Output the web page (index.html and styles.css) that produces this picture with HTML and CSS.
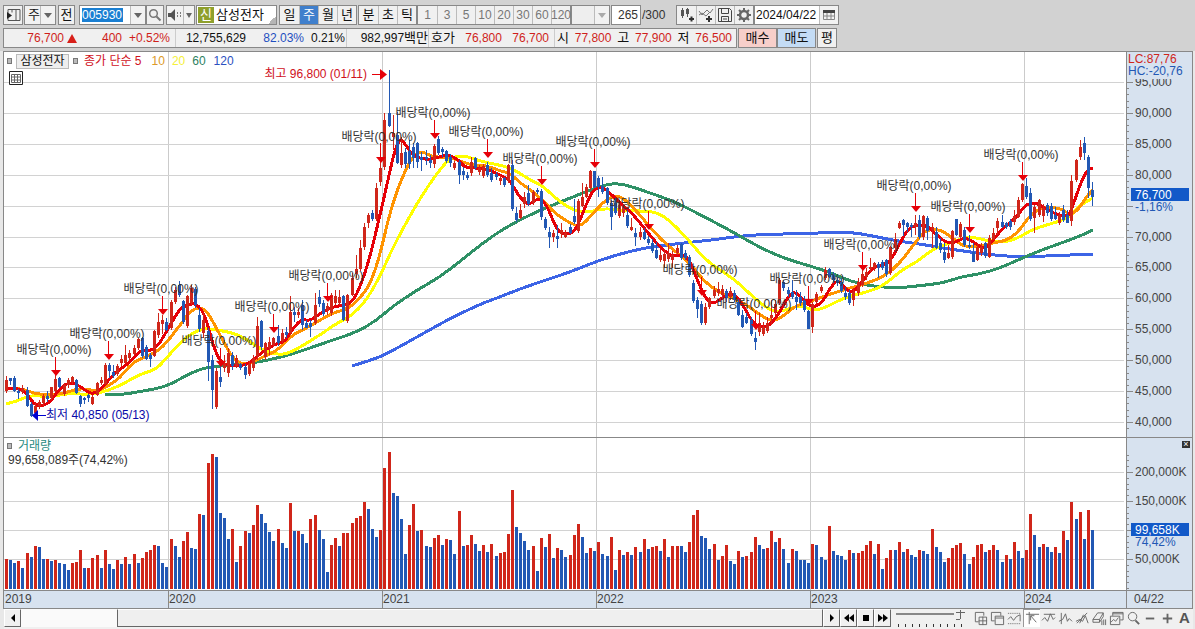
FILE: index.html
```html
<!DOCTYPE html>
<html lang="ko">
<head>
<meta charset="utf-8">
<title>삼성전자 주봉 차트</title>
<link rel="stylesheet" href="styles.css">
</head>
<body>
<header class="top">
  <form class="tools">
    <button type="button" class="btn" aria-label="패널"><svg width="15" height="14" viewBox="0 0 15 14"><path d="M2 5V1.500h12v11H2V10M6 1.500v3M10 12V2" fill="none" stroke="#555"/><path d="M1 4l5 3.500L1 11z" fill="#222"/></svg></button>
    <span class="drop drop-s"><select aria-label="구분"><option>주</option></select><i class="arrow"></i></span>
    <button type="button" class="btn prev">전</button>
    <span class="drop code"><input class="code-in" aria-label="종목코드" value="005930"><i class="arrow"></i></span>
    <button type="button" class="btn flush" aria-label="검색"><svg width="14" height="14" viewBox="0 0 14 14"><circle cx="5.500" cy="5.500" r="3.800" fill="none" stroke="#777" stroke-width="1.500"/><path d="M8.500 8.500l4 4" stroke="#777" stroke-width="2"/></svg></button>
    <span class="drop snd"><button type="button" aria-label="소리"><svg width="15" height="14" viewBox="0 0 15 14"><path d="M1 5h3l4-4v12L4 9H1z" fill="#555"/><path d="M10 5h1M13 5h1M10 8h1M13 8h1" stroke="#555" stroke-width="1.500"/></svg></button><i class="arrow arrow-s"></i></span>
    <span class="name"><b>신</b><input aria-label="종목명" value="삼성전자"></span>
    <span class="seg"><button type="button">일</button><button type="button" class="on">주</button><button type="button">월</button><button type="button">년</button></span>
    <span class="seg flat"><button type="button">분</button><button type="button">초</button><button type="button">틱</button></span>
    <span class="seg flat off"><button type="button">1</button><button type="button">3</button><button type="button">5</button><button type="button">10</button><button type="button">20</button><button type="button">30</button><button type="button">60</button><button type="button">120</button></span>
    <span class="drop blank"><select aria-label="주기" disabled><option></option></select><i class="arrow arrow-off"></i></span>
    <span class="count"><input id="cnt" aria-label="봉 개수" value="265"><label for="cnt">/300</label></span>
    <span class="seg flat icons">
      <button type="button" aria-label="봉 추가"><svg width="16" height="16" viewBox="0 0 16 16"><path d="M3.500 1v10M8.500 1v9" stroke="#555"/><path d="M2 3h3v6H2zM7 2h3v5H7z" fill="#555"/><path d="M10 12h5M12.500 9.500v5" stroke="#333" stroke-width="2"/></svg></button>
      <button type="button" aria-label="지표 추가"><svg width="16" height="16" viewBox="0 0 16 16"><path d="M1 4l3 4 5-5 3 3 3-4M1 8l3-2 4 3 3-3" fill="none" stroke="#777"/><path d="M8 12h6M11 9v6" stroke="#333" stroke-width="2"/></svg></button>
      <button type="button" aria-label="저장"><svg width="16" height="16" viewBox="0 0 16 16"><path d="M1.500 1.500h11l2 2v11h-13zM4.500 1.500v5h7v-5M4.500 14.500v-5h7v5M6 12h4" fill="none" stroke="#444"/></svg></button>
      <button type="button" aria-label="설정"><svg width="16" height="16" viewBox="0 0 16 16"><circle cx="8" cy="8" r="4" fill="none" stroke="#666" stroke-width="2.500"/><path d="M8 1v3M8 12v3M1 8h3M12 8h3M3 3l2 2M11 11l2 2M13 3l-2 2M3 13l2-2" stroke="#666" stroke-width="2"/></svg></button>
    </span>
    <span class="date"><input aria-label="날짜" value="2024/04/22"><button type="button" aria-label="달력"><svg width="12" height="12" viewBox="0 0 12 12"><path d="M.500 1.500h11v9H.500zM4 4v6M8 4v6M1 7h10" fill="none" stroke="#888"/><path d="M0 1h12v3H0z" fill="#444"/></svg></button></span>
  </form>
  <div class="quote">
    <div class="strip">
      <div class="cell c1"><span class="up w1">76,700</span><i class="tri"></i><span class="up w2">400</span><span class="up w3">+0.52%</span></div>
      <div class="cell c2"><span class="w4">12,755,629</span><span class="down w5">82.03%</span><span class="w6">0.21%</span></div>
      <div class="cell c3"><span>982,997<span class="ko">백만</span></span></div>
      <div class="cell c4"><span class="ko">호가</span><span class="up">76,800</span><span class="up">76,700</span></div>
      <div class="cell c5"><span class="ko">시</span><span class="up">77,800</span><span class="ko">고</span><span class="up">77,900</span><span class="ko">저</span><span class="up">76,500</span></div>
    </div>
    <button type="button" class="trade buy">매수</button><button type="button" class="trade sell">매도</button><button type="button" class="btn avg">평</button>
  </div>
</header>
<main class="chart">
  <section class="panel price">
    <svg class="draw" id="price"></svg>
    <div class="legend"><i class="dot"></i><span class="tag">삼성전자</span><i class="dot"></i><span class="m5">종가 단순 5</span><span class="m10">10</span><span class="m20">20</span><span class="m60">60</span><span class="m120">120</span></div>
    <button type="button" class="table-btn" aria-label="표"><svg width="14" height="14" viewBox="0 0 14 14"><path d="M.500.500h13v13H.500z" fill="#fff" stroke="#222"/><path d="M2.500 3.500h9v8h-9zM2.500 6h9M2.500 9h9M5.500 3v8.500M8.500 3v8.500" fill="none" stroke="#666"/></svg></button>
  </section>
  <aside class="axis"><svg class="draw" id="priceAxis"></svg></aside>
  <section class="panel volume">
    <svg class="draw" id="vol"></svg>
    <div class="legend vleg"><i class="dot"></i><span class="vname">거래량</span></div>
    <div class="vval">99,658,089주(74,42%)</div>
  </section>
  <aside class="axis volume"><svg class="draw" id="volAxis"></svg><button type="button" class="close" aria-label="닫기">×</button></aside>
  <div class="years"><svg class="draw" id="years"></svg></div>
  <div class="years last">04/22</div>
</main>
<footer class="foot">
  <button type="button" class="raised" aria-label="왼쪽"><svg width="6" height="8"><path d="M5 0v8L1 4z"/></svg></button>
  <div class="track"><div class="thumb"></div></div>
  <button type="button" class="raised" aria-label="오른쪽"><svg width="6" height="8"><path d="M1 0v8l4-4z"/></svg></button>
  <button type="button" class="raised" aria-label="빠르게 뒤로"><svg width="10" height="8"><path d="M5 0v8L0 4zM10 0v8L5 4z"/></svg></button>
  <button type="button" class="raised" aria-label="정지"><svg width="8" height="8"><path d="M1 1h6v6H1z"/></svg></button>
  <button type="button" class="raised" aria-label="빠르게 앞으로"><svg width="10" height="8"><path d="M0 0v8l5-4zM5 0v8l5-4z"/></svg></button>
  <input type="range" class="speed" aria-label="속도" value="100">
  <div class="draws">
    <button type="button" aria-label="창 추가"><svg viewBox="0 0 16 16"><path d="M6 11.500H2.500V1.500h9V5M6.500 6.500h8v8h-8zM10.500 6v9M6 10.500h9"/></svg></button>
    <button type="button" aria-label="창 겹치기"><svg viewBox="0 0 16 16"><path d="M5 10.500H1.500V1.500h10V5M5.500 5.500h9v9h-9zM5.500 7.500h9"/></svg></button>
    <button type="button" aria-label="영역"><svg viewBox="0 0 16 16"><path d="M1 2.500h13M1 13.500h13" stroke-dasharray="1 1"/><path d="M1 9l3-3 3 4 3-4 4-2M14 4v7"/></svg></button>
    <button type="button" class="on" aria-label="십자선"><svg viewBox="0 0 16 16"><path d="M1 3.500h14M4.500 1v13M6 5l6 7M6 5h4M6 5v5"/></svg></button>
    <button type="button" aria-label="추세"><svg viewBox="0 0 16 16"><path d="M3 3.500h12M1 10l3-3 3 4 3-8 3 6 2-2"/></svg></button>
    <button type="button" aria-label="파동"><svg viewBox="0 0 16 16"><path d="M3.500 2v12M1 11l4-2 3-6 2 8 2-3 3 3"/></svg></button>
    <button type="button" aria-label="추세선"><svg viewBox="0 0 16 16"><path d="M2 13L13 2M1 11l4-2 3 2 3-6 3 8M5 13L9 4"/></svg></button>
    <button type="button" aria-label="지우개"><svg viewBox="0 0 16 16"><path d="M1 9l5-7h6L8 9zM1 9v3h7V9M8 12l4-6V2M10.500 10v5M12.500 9v6M14.500 9v6"/></svg></button>
    <button type="button" aria-label="차트 저장"><svg viewBox="0 0 16 16"><path d="M4 5V1.500h11v8h-3M1.500 5.500h10v9h-10zM2 12l3-3 2 2 3-4M4 3h11"/></svg></button>
    <button type="button" aria-label="확대경"><svg viewBox="0 0 16 16"><circle cx="7" cy="6" r="4.500"/><path d="M10 10l4 4" stroke-width="2"/></svg></button>
    <button type="button" aria-label="축소"><svg viewBox="0 0 16 16"><path d="M3 8h9" stroke-width="2"/></svg></button>
    <button type="button" aria-label="확대"><svg viewBox="0 0 16 16"><path d="M3 8h10M8 3v10" stroke-width="2"/></svg></button>
    <button type="button" class="big">A</button>
  </div>
</footer>
<script src="chart.js"></script>
</body>
</html>
```
FILE: styles.css
```css
* { box-sizing: border-box; }
body {
  margin: 0; height: 100vh; display: flex; flex-direction: column;
  background: #e8e8e8; color: #111; overflow: hidden;
  font: 12px/16px "Liberation Sans", "Noto Sans CJK KR", sans-serif;
}
button, input, select { font: inherit; color: inherit; margin: 0; padding: 0; border: 0; border-radius: 0; background: none; min-width: 0; }
button { display: inline-flex; align-items: center; justify-content: center; }
svg { display: block; flex: none; }
.top { background: #d2d2d2; padding: 5px 3px 3px; display: flex; flex-direction: column; gap: 3px; }
.tools { display: flex; height: 20px; }
.tools > * { flex: none; }
.btn, .drop, .seg, .name, .date, .trade, .strip { border: 1px solid #888; background: #f0f0f0; height: 20px; }
.btn { width: 20px; font-size: 13px; }
.drop { display: flex; align-items: center; background: #fff; }
.arrow { width: 15px; height: 18px; display: flex; align-items: center; justify-content: center; background: #f2f2f2; border-left: 1px solid #bbb; pointer-events: none; }
.arrow::before { content: ""; border: 4px solid transparent; border-top: 5px solid #666; border-bottom: 0; }
.arrow-s { width: 11px; }
.arrow-s::before { border-width: 5px 3px 0; }
.arrow-off::before { border-top-color: #aaa; }
select { appearance: none; flex: 1; font-size: 13px; height: 18px; opacity: 1; }
.drop-s { width: 32px; margin-left: 1px; padding-left: 3px; background: #f2f2f2; }
.prev { width: 17px; margin: 0 4px 0 2px; }
.code { width: 67px; padding-left: 2px; }
.code-in { width: 41px; height: 14px; background: #1a7fd2; color: #fff; margin-right: auto; }
.flush { width: 18px; margin-right: 2px; }
.snd { width: 29px; justify-content: space-between; background: #f2f2f2; }
.name { width: 81px; margin: 0 2px 0 1px; display: flex; background: linear-gradient(135deg, transparent 50%, #b5b5b5 50%) right bottom / 8px 8px no-repeat #fff; }
.name b { width: 16px; margin: 1px; background: #8fa02c; color: #fff; font: inherit; font-size: 13px; text-align: center; }
.name input { flex: 1; font-size: 13px; padding-left: 1px; }
.seg { display: flex; margin-right: 1px; }
.seg button { width: 19px; border-left: 1px solid #bbb; font-size: 13px; }
.seg button:first-child { border-left: 0; }
.seg .on { background: #3f7fcc; color: #fff; }
.flat { margin-right: 0; }
.off { color: #777; }
.seg.off button { font-size: 12px; }
.blank { width: 39px; background: #eee; }
.count { display: flex; align-items: center; margin: 0 11px 0 1px; color: #333; }
.count input { width: 30px; height: 20px; border: 1px solid #888; background: #fff; text-align: right; padding-right: 2px; }
.count label { width: 24px; padding-left: 1px; }
.date { width: 85px; display: flex; background: #fff; }
.date input { flex: 1; padding-left: 1px; }
.date button { width: 19px; border-left: 1px solid #bbb; background: #f2f2f2; }
.quote { display: flex; }
.strip { width: 734px; display: flex; margin-right: 1px; white-space: nowrap; }
.cell { display: flex; align-items: center; border-right: 1px solid #ccc; }
.cell:last-child { border-right: 0; }
.ko, .trade { font-size: 13px; }
.up { color: #cf1f1b; }
.down { color: #1f4fc0; }
.c1 { width: 172px; text-align: right; }
.w1 { width: 60px; }
.w2 { width: 45px; }
.w3 { width: 48px; }
.tri { border: 5px solid transparent; border-bottom: 9px solid #d8201a; border-top: 0; margin-left: 3px; }
.c2 { width: 171px; text-align: right; }
.w4 { width: 70px; }
.w5 { width: 58px; }
.w6 { width: 41px; }
.c3 { width: 82px; justify-content: flex-end; }
.c4 { width: 126px; justify-content: space-between; padding: 0 5px 0 2px; }
.c5 { flex: 1; justify-content: space-between; padding: 0 4px 0 2px; }
.trade { width: 39px; }
.buy { background: #f7cfca; }
.sell { background: #c4dcf5; }
.avg { margin-left: 1px; }
.chart { flex: 1; min-height: 0; margin: 0 2px 0 3px; border: 1px solid #888; display: grid; grid-template-columns: 1fr 66px; grid-template-rows: 385fr 153fr 18px; }
.panel { position: relative; background: #fff; min-height: 0; min-width: 0; }
.axis { position: relative; background: #d7e2ef; border-left: 1px solid #888; min-height: 0; color: #444; }
.draw { position: absolute; left: 0; top: 0; width: 100%; height: 100%; overflow: hidden; }
.volume { border-top: 1px solid #888; }
.legend { position: relative; display: flex; align-items: center; height: 16px; padding: 0 3px; }
.legend span { font-size: 12px; }
.price .legend { margin-top: 1px; }
.dot { width: 5px; height: 6px; border: 1px solid #777; background: #bbb; }
.tag { border: 1px solid #bbb; background: #eee; margin: 0 4px; padding: 0 1px; line-height: 13px; width: 53px; text-align: center; }
.m5 { color: #d0101c; margin-left: 6px; margin-right: 10px; }
.m10 { color: #dc9a28; margin-right: 7px; }
.m20 { color: #f5f03a; margin-right: 7px; }
.m60 { color: #2d8160; margin-right: 8px; }
.m120 { color: #2c50c0; }
.table-btn { position: relative; margin: 2px 0 0 5px; }
.vname { color: #268a80; margin-left: 6px; }
.vval { position: relative; padding-left: 4px; line-height: 12px; color: #333; }
.close { position: absolute; right: 2px; top: 3px; width: 8px; height: 7px; background: #333; color: #fff; font-size: 9px; line-height: 7px; }
.years { position: relative; background: #d7e2ef; border-top: 1px solid #888; color: #444; }
.last { border-left: 1px solid #888; padding-left: 7px; line-height: 16px; }
svg text { font-size: 12px; fill: #333; }
.foot { height: 20px; margin: 0 2px 0 4px; display: flex; background: #f0f0f0; }
.raised { width: 17px; height: 18px; border: 1px solid #fff; border-right-color: #666; border-bottom-color: #666; background: #f0f0f0; flex: none; }
.track { flex: 1; height: 18px; background: #fafafa; display: flex; justify-content: flex-end; }
.thumb { width: 88%; border: 1px solid #fff; border-left-color: #666; border-right-color: #666; border-bottom: 1px solid #666; background: #efefef; }
.speed { appearance: none; width: 69px; height: 18px; margin: 0 7px 0 5px; background: linear-gradient(#888, #888) 0 4px / 58px 2px no-repeat, repeating-linear-gradient(90deg, #333 0 1px, transparent 1px 7px) 2px 15px / 100% 3px no-repeat; }
.speed::-webkit-slider-thumb { appearance: none; width: 9px; height: 10px; margin-bottom: 6px; background: linear-gradient(#666, #666) 0 2px / 9px 1px no-repeat, linear-gradient(#666, #666) 4px 0 / 1px 9px no-repeat, linear-gradient(#666, #666) 0 9px / 4px 1px no-repeat; }
.draws { display: flex; height: 18px; }
.draws button { width: 17px; }
.draws .on { background: #fff; border-left: 1px solid #999; border-top: 1px solid #999; }
.draws svg { width: 15px; height: 15px; fill: none; stroke: #666; }
.draws .big { font-size: 15px; font-weight: bold; color: #555; }
```
FILE: chart.js
```js
// Candles: direction, high, body top, body bottom, low (panel units).
const candles = `r376,380,391,393 b378,378,381,385 b376,378,391,392 b389,391,393,399 r385,388,392,394 b387,390,406,407 b402,404,416,417 r403,406,413,414 r400,402,406,409 r394,396,403,407
b391,396,399,402 r387,387,398,400 r375,379,391,392 b377,378,387,388 r383,385,394,396 r378,380,385,388 r376,377,382,384 b379,380,393,394 b395,396,404,407 b397,398,400,404
b394,395,398,402 r395,397,404,405 r382,383,395,396 r377,380,383,385 r363,365,384,385 b363,365,371,378 b365,372,376,378 r364,366,374,376 r355,359,363,366 r345,355,363,363
r350,353,358,360 r345,348,354,355 r338,339,348,350 b337,338,356,358 b345,347,359,360 b353,355,359,367 r330,331,356,357 r313,322,335,338 r315,320,324,334 b318,322,330,331
r300,302,328,330 r287,290,302,304 b281,285,295,297 b300,301,322,324 r295,296,326,328 r285,288,303,305 b287,289,305,308 b308,315,329,332 r313,320,333,338 b328,331,362,381
b355,360,390,409 r368,371,407,409 b362,377,382,387 r355,363,368,372 r348,353,373,377 b352,355,366,370 r355,358,366,368 b363,364,368,370 b364,367,375,379 r361,364,374,376
r355,358,368,371 r317,326,356,360 b320,321,347,350 r342,343,357,360 r337,342,348,355 r337,338,345,347 b325,336,343,346 r329,333,341,343 b327,332,335,338 r296,312,333,335
b307,312,315,322 r308,312,315,318 b300,305,325,330 b320,323,328,328 b320,323,327,337 r293,305,323,325 b290,297,304,307 b300,303,314,316 r303,306,311,315 r293,295,313,316
r290,296,303,305 r290,297,303,305 b295,296,320,321 r294,295,321,323 r273,278,295,296 r255,269,274,278 r240,248,269,271 r223,227,247,250 r213,215,223,228 b210,213,219,221
r183,188,219,221 r143,168,182,186 r113,120,167,170 b70,113,126,127 r115,133,137,150 b112,135,163,164 r137,153,165,168 b148,152,164,168 b140,151,164,169 b143,147,158,168
b142,143,162,168 b152,157,160,171 b150,157,159,165 b155,160,163,168 r144,146,164,168 b136,139,153,155 b147,149,152,157 b150,151,161,163 b154,157,163,167 r161,163,168,170
b160,162,175,184 b167,171,175,180 b172,175,178,180 r157,162,173,176 b157,158,168,170 r165,168,172,175 r164,166,176,178 b162,165,175,177 b168,173,180,182 b172,174,177,180
r175,178,181,185 b177,178,185,187 r164,165,181,183 b160,165,209,211 b207,213,220,222 r204,210,218,219 r192,197,204,208 b185,193,204,206 r190,192,203,205 b188,190,192,194
b189,191,217,220 b217,219,228,230 b227,232,237,248 r230,233,237,242 b225,236,239,248 r223,230,234,238 r230,233,237,238 b224,227,233,234 b199,216,222,224 r199,201,231,233
r183,197,206,207 r184,187,197,198 r170,171,188,190 b171,171,187,188 b176,178,187,197 b177,186,192,194 b187,188,203,205 b200,203,217,230 b198,203,213,215 r203,205,216,218
r205,207,213,217 b210,215,226,228 r218,227,230,231 b228,233,237,246 r227,232,237,240 b228,232,239,240 b236,239,243,245 b239,243,251,253 b242,250,258,259 r249,255,260,262
r249,254,261,268 r243,253,259,262 r251,255,260,268 r245,248,253,255 b243,244,258,260 b250,253,258,260 b255,257,275,277 b280,283,301,303 b297,300,309,318 b301,304,323,325
r303,307,323,325 r297,298,307,309 r286,290,296,298 r282,289,293,296 r285,289,295,298 b289,291,298,302 r287,291,297,300 b290,293,300,302 b299,302,315,316 b310,315,327,328
b313,317,323,324 b317,320,334,336 b332,338,342,350 r313,323,332,336 r322,327,334,336 r317,323,331,333 r300,315,318,325 r300,304,313,315 r278,280,303,305 b280,282,288,291
b287,290,294,297 b280,292,297,299 b290,297,302,310 b292,297,303,306 b296,300,310,312 b310,311,329,329 r302,304,327,333 r292,294,302,304 r285,287,291,293 r267,270,278,280
b268,269,277,278 b272,275,280,283 b277,280,283,286 b278,282,291,293 b287,293,297,300 b290,293,303,305 r288,292,300,306 r278,282,293,296 r270,274,285,287 r268,272,277,280
r258,267,269,272 r262,263,268,271 b262,264,268,278 b260,262,268,270 b259,260,274,277 r246,247,273,275 r233,239,248,250 r221,223,228,229 b219,220,225,236 b222,223,227,232
b223,225,227,237 r215,223,227,235 b215,220,237,239 r215,216,237,240 b216,218,231,240 r223,227,230,248 b227,232,248,249 b238,243,250,253 b243,252,260,263 r245,253,258,259
r230,231,257,259 b219,219,235,236 r222,224,237,238 b227,230,245,247 b235,245,247,249 b243,252,262,262 r244,247,260,261 r243,247,253,256 b242,243,256,258 r235,238,257,258
r228,233,239,240 r218,221,228,235 b215,222,227,228 b222,223,227,229 b219,221,227,230 r210,216,222,225 r197,200,217,218 r183,184,200,202 b178,186,197,199 b188,193,219,221
r205,207,218,233 r199,200,215,217 r204,208,216,222 b203,205,213,216 b203,206,219,221 b207,215,219,220 r212,215,223,225 b205,210,220,222 b210,215,223,223 r175,181,221,226
r159,160,180,182 r140,147,157,160 b137,143,153,160 b155,157,188,198 b182,190,197,206`.split(/\s+/);

// Volume bars: direction and top edge, a third of a panel unit each, measured down to 461.
const volumes = `r372 b375 b384 r378 b399 r354 b366 r333 b336 b372 r372 b378 r375 b384 b387 b405 r384 r381 r345 b399 r399 r369 r360 b399 r345 b387 b402 r375 b387 r366
b387 r357 b384 r369 r351 r345 r330 b333 b384 b396 r312 b333 b366 r318 r291 b339 b342 r237 b240 r84 r57 b66 b234 b249 b312 r282 b381 r333 r288 b294
r270 r210 b237 b264 b291 b318 r282 b324 b339 r204 b288 r288 b297 b324 r252 r240 b285 b312 b411 r330 r309 b333 r294 r294 r264 r249 r243 r201 b222 b282
b306 r285 r99 r51 b174 b183 b252 b357 r270 r207 b288 r285 b333 b336 r309 r300 b330 r312 b315 b357 r228 b333 r330 r300 b327 b348 r330 b351 r327 b363
r354 r351 r297 r165 b276 b294 b318 b345 r333 b408 r309 b336 r297 b369 r339 b345 b366 r360 r300 r267 b306 b354 r339 b348 r321 b357 b363 r306 b405 r345
b360 r351 b360 r336 b351 r312 b342 r336 r333 b348 r312 b366 r333 r333 b333 b351 r321 r240 r225 b303 b309 b342 r327 b375 r363 r330 b378 b387 r348 b366
r363 r351 r306 b330 b342 r339 r288 b321 r309 b342 b384 r342 b348 b375 b375 b384 r327 b330 b366 b375 r273 b348 b360 b363 b375 r345 b354 r354 r348 r330
r318 b357 r327 b402 r369 r345 b345 r321 b351 r342 b360 b366 r345 b348 b357 r282 b336 b351 b381 r369 r339 r330 r324 b357 b387 r366 r330 r327 b351 r345
r330 b345 b381 r360 b372 r321 b348 b369 r345 r237 b300 b336 r327 b336 b351 r336 b354 r288 b315 r201 b252 r231 b312 r225 b285`.split(/\s+/);

const averages = [
  ['#3c64e6', '352,366 375,359 390,352 417,337 433,328 453,317 483,303 500,297 517,290 537,283 573,271 597,261 627,252 650,247 683,243 713,240 747,235 783,234 820,233 850,232 873,236 897,241 920,244 943,248 970,252 993,255 1020,257 1047,256 1093,254'],
  ['#2f9166', '105,395 120,395 143,391 160,388 173,383 187,375 203,368 220,366 253,363 283,357 310,348 330,341 357,332 377,320 393,306 417,290 440,277 463,259 483,243 500,231 523,218 550,206 573,197 600,186 617,183 633,187 650,193 673,201 697,213 733,232 757,246 783,258 820,269 833,274 850,281 870,286 897,288 917,286 943,283 960,277 980,274 1000,268 1027,256 1047,248 1067,241 1080,236 1093,230'],
  ['#ffff00', '6,404 18,401 30,395 50,397 70,393 90,395 110,390 125,383 140,374 155,370 165,360 175,348 190,334 205,328 215,330 230,332 245,338 260,349 277,355 290,353 317,337 337,323 350,317 367,300 383,270 393,247 417,203 437,173 450,158 463,155 483,162 510,167 530,180 543,186 553,196 570,209 587,213 603,208 627,211 653,211 667,218 687,238 707,262 733,278 753,297 772,312 787,310 800,305 817,312 843,298 867,292 883,286 903,269 917,262 933,249 950,243 970,236 987,241 1007,242 1020,237 1033,229 1057,222 1070,217 1080,205 1093,198'],
  ['#ff9400', '6,388 20,388 35,394 52,395 65,393 80,388 95,391 105,388 120,378 132,363 145,357 158,351 168,341 180,325 190,312 198,307 206,310 215,325 225,345 235,361 247,365 265,356 278,350 292,335 305,329 320,320 335,312 348,309 360,298 370,285 380,255 388,220 397,190 410,160 420,150 432,157 445,157 455,159 470,165 485,165 500,171 510,173 520,183 535,193 547,205 557,215 570,223 580,227 592,215 603,202 615,195 625,199 640,215 655,233 668,246 683,257 695,270 705,282 720,293 735,299 747,305 760,315 773,322 785,315 795,306 812,301 830,294 850,288 865,284 885,276 900,263 915,243 925,230 940,229 955,240 965,247 980,246 993,243 1008,240 1020,230 1030,215 1043,207 1060,208 1070,215 1078,210 1087,196 1093,190'],
  ['#e60008', '6,388 22,388 28,396 35,405 44,406 52,400 60,388 70,382 80,386 90,394 97,392 104,386 115,372 130,363 140,350 150,351 158,346 168,329 180,308 188,305 195,303 202,310 207,322 213,345 220,362 230,366 240,366 250,363 262,352 275,344 285,342 293,328 302,319 310,321 322,312 335,306 348,305 356,297 368,265 380,215 388,180 394,153 400,138 406,145 412,155 425,160 437,158 448,154 460,161 465,168 485,168 500,175 510,180 518,195 528,206 537,198 546,203 556,228 562,234 572,234 578,225 588,200 594,189 603,187 612,195 620,203 633,214 648,233 660,247 672,257 682,254 690,260 698,283 710,306 722,298 732,292 742,303 752,322 762,328 770,325 778,315 788,297 795,291 803,300 812,308 822,303 830,288 838,279 846,290 854,292 862,282 872,268 882,265 890,262 900,243 908,229 916,225 925,225 932,230 944,242 955,243 965,237 975,243 985,250 993,240 1003,228 1017,217 1025,205 1035,202 1045,208 1055,214 1068,217 1072,208 1080,185 1087,170 1093,168']
];

// Ex-dividend marks: arrow x, label centre y.
const dividends = [[55,349],[108,333],[162,288],[220,340],[273,306],[327,275],[380,136],[434,112],[487,131],[541,158],[594,141],[648,203],[701,269],[755,303],[808,278],[862,244],[915,185],[969,206],[1022,154]];
const years = [[4, 2019], [168, 2020], [382, 2021], [596, 2022], [810, 2023], [1024, 2024]];
const RED = '#d0261a', BLUE = '#2258b4';

const $ = id => document.getElementById(id);
const box = (x, y, w, h, c) => `<rect x="${x}" y="${y}" width="${w}" height="${h}" fill="${c}"/>`;
const label = (x, y, s, c = '#444', a = 'start') => `<text x="${x}" y="${y}" text-anchor="${a}" style="fill:${c}">${s}</text>`;

function draw() {
  const W = $('price').clientWidth, H = $('price').clientHeight, V = $('vol').clientHeight;
  const X = x => (x - 4) * W / 1122, Y = y => (y - 52) * H / 385, R = Math.round;
  const bx = i => R(X(6.5 + i * 1086 / 264) - 1.5);
  const grid = h => years.slice(1).map(([x]) => box(R(X(x)), 0, 1, h, '#cbcbcb')).join('');
  const py = p => R(Y(422 - (p - 40) * 6.182));

  let s = grid(H), a = '';
  for (let p = 40; p <= 95; p += 5) {
    s += box(0, py(p), W - 2, 1, '#d2d2d2');
    // The last-price tag takes the place of the 75,000 label.
    a += box(0, py(p), 6, 1, '#888') + (p === 75 ? '' : label(8, py(p) + 4, p + ',000'));
  }
  for (let p = 39; p < 95; p++) a += box(0, py(p), 2, 1, '#888');
  for (const [col, pts] of averages) {
    const p = pts.split(' ').map(q => q.split(',')).map(([x, y]) => [X(+x), Y(+y)]);
    let d = `M${p[0]}`;
    for (let i = 1; i < p.length - 1; i++) d += `Q${p[i]} ${(p[i][0] + p[i + 1][0]) / 2},${(p[i][1] + p[i + 1][1]) / 2}`;
    s += `<path d="${d}L${p[p.length - 1]}" fill="none" stroke="${col}" stroke-width="3" shape-rendering="crispEdges"/>`;
  }
  candles.forEach((c, i) => {
    const [h, t, b, l] = c.slice(1).split(',').map(v => R(Y(+v))), col = c[0] === 'r' ? RED : BLUE;
    s += box(bx(i) + 1, h, 1, l - h, col) + box(bx(i), t, 3, Math.max(2, b - t), col);
  });
  for (const [x, y] of dividends) {
    const cx = R(X(x)), cy = R(Y(y));
    s += box(cx, cy + 8, 1, 14, '#e60008') + `<path d="M${cx - 4} ${cy + 21}h10l-5 6z" fill="#e60008"/>` + label(cx - 1, cy + 5, '배당락(0,00%)', '#333', 'middle');
  }
  const hx = R(X(388)), hy = R(Y(74)), lx = R(X(32)), ly = R(Y(415));
  s += label(hx - 21, hy + 4, '최고 96,800 (01/11)', '#d0101c', 'end') + `<path d="M${hx - 16} ${hy + .5}h10" stroke="#e60008"/><path d="M${hx - 8} ${hy - 5}v11l7-5.500z" fill="#e60008"/>`;
  s += label(lx + 14, ly + 4, '최저 40,850 (05/13)', '#0808a8') + `<path d="M${lx + 5} ${ly + .5}h9" stroke="#0000d0"/><path d="M${lx + 6} ${ly - 5}v11l-6-5.500z" fill="#0000d0"/>`;
  $('price').innerHTML = s;

  a += box(0, 0, 64, Y(79), '#d7e2ef') + label(1, R(Y(63)), 'LC:87,76', RED) + label(1, R(Y(75)), 'HC:-20,76', BLUE);
  a += box(4, Y(188), 58, 13, '#1259c8') + label(8, Y(199), '76,700', '#fff') + label(8, Y(211), '-1,16%', BLUE);
  $('priceAxis').innerHTML = a;

  const vy = k => R((150 - k * .58) * V / 152);
  s = grid(V); a = '';
  for (const k of [50, 100, 150, 200]) {
    s += box(0, vy(k), W - 2, 1, '#d2d2d2');
    // The latest volume tag stands where the 100,000K label would be.
    a += box(0, vy(k), 6, 1, '#888') + (k === 100 ? '' : label(8, vy(k) + 4, k + ',000K'));
  }
  for (let k = 0; k <= 235; k += 10) a += box(0, vy(k), 2, 1, '#888');
  volumes.forEach((v, i) => {
    const h = R((461 - v.slice(1)) / 3 * V / 152);
    s += box(bx(i), R(151 * V / 152) - h, 3, h, v[0] === 'r' ? RED : BLUE);
  });
  $('vol').innerHTML = s;
  const ty = vy(99.658);
  a += box(4, ty - 7, 58, 13, '#1259c8') + label(8, ty + 4, '99,658K', '#fff') + label(8, ty + 16, '74,42%', BLUE);
  $('volAxis').innerHTML = a;
  $('years').innerHTML = years.map(([x, n], i) => (i ? box(R(X(x)), 0, 1, 18, '#888') : '') + label(R(X(x)) + 1, 12, n)).join('');
}
draw();
addEventListener('resize', draw);
```
